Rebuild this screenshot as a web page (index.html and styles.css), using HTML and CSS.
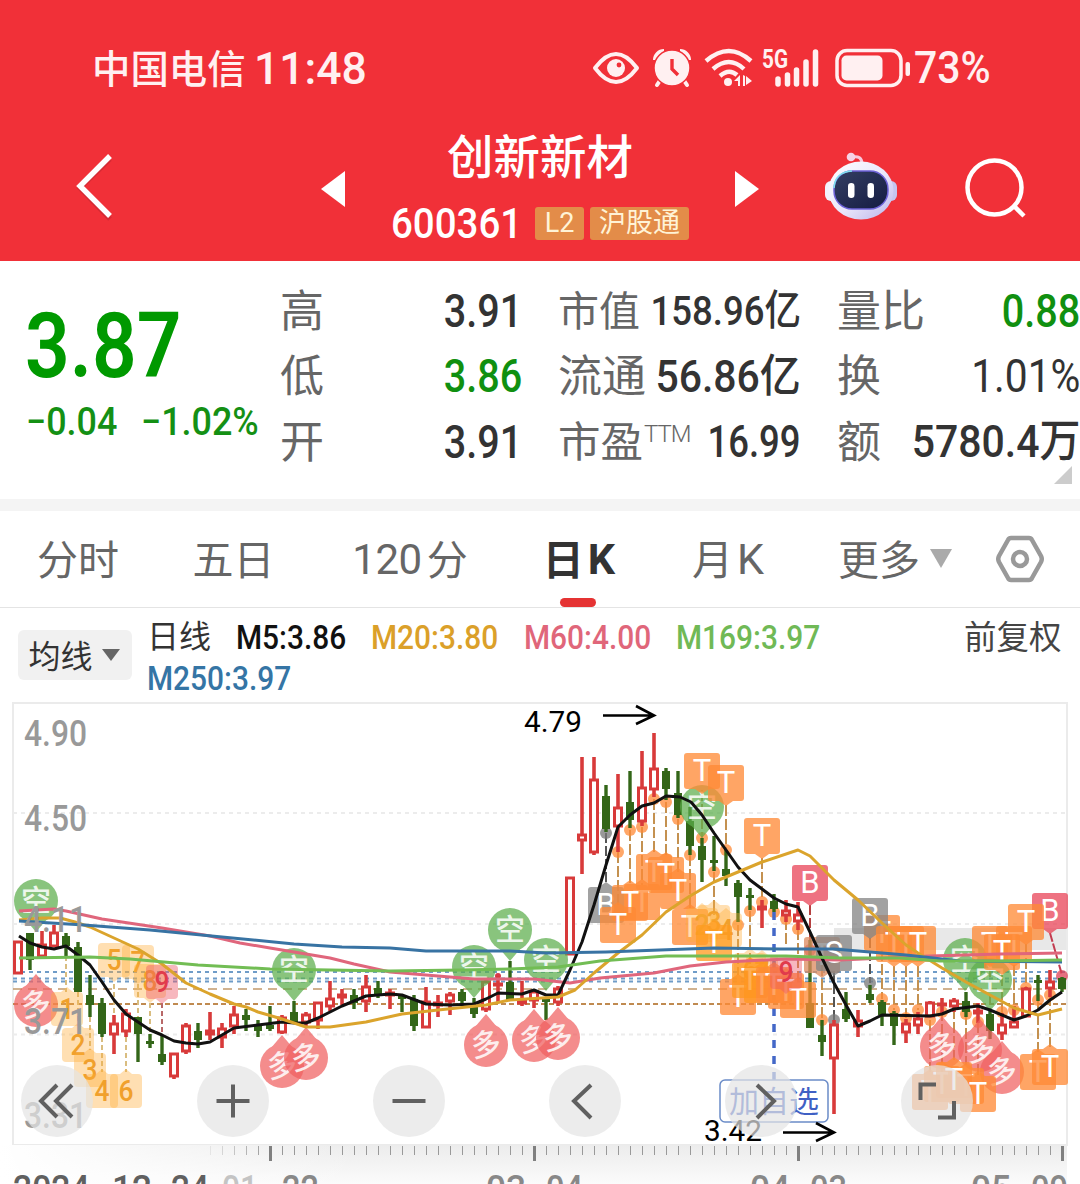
FILE: index.html
```html
<!doctype html>
<html lang="zh">
<head>
<meta charset="utf-8">
<title>创新新材 600361</title>
<link rel="stylesheet" href="styles.css">
</head>
<body>
<div class="wrap">
	<div class="header">
		<div class="status">
			<span class="carrier">中国电信</span>
			<span class="time">11:48</span>
			<div class="status-icons">
				<svg class="eye" width="46" height="32" viewBox="0 0 46 32"><path d="M2 16Q23-12 44 16Q23 44 2 16Z" fill="none" stroke="#fff0f1" stroke-width="4" stroke-linejoin="round"/><circle cx="23" cy="16" r="9" fill="#fff0f1"/><circle cx="26" cy="13" r="2.4" fill="#f13038"/></svg>
				<svg class="alarm" width="38" height="38" viewBox="0 0 38 38"><path d="M8 30L4 36M30 30L34 36" stroke="#fff0f1" stroke-width="4" stroke-linecap="round"/><path d="M2 11A9 9 0 0 1 11 2M36 11A9 9 0 0 0 27 2" fill="none" stroke="#fff0f1" stroke-width="4"/><circle cx="19" cy="19" r="18" fill="#fff0f1" stroke="#f13038" stroke-width="1.500"/><path d="M19 10V20L25 26" fill="none" stroke="#f13038" stroke-width="3.4"/></svg>
				<svg class="wifi" width="48" height="38" viewBox="0 0 48 38"><g fill="none" stroke="#fff0f1" stroke-width="4.4"><path d="M1 12Q24-8 46 12"/><path d="M8 20Q24 6 39 20"/><path d="M15 27Q24 19 32 26"/></g><circle cx="23" cy="33" r="4" fill="#fff0f1"/><path d="M29 32L35 26V37H33V32ZM38 26L40 27V37H38ZM41 27L47 32L41 36Z" fill="#fff0f1"/></svg>
				<svg class="signal" width="58" height="38" viewBox="0 0 58 38"><text x="0" y="19" font-size="25" font-weight="700" textLength="26" lengthAdjust="spacingAndGlyphs" fill="#fff0f1">5G</text><path d="M16 30V35M25.500 26V35M34.500 21V35M44 13V35M53.500 3V35" stroke="#fff0f1" stroke-width="5.500" stroke-linecap="round"/></svg>
				<svg class="battery" width="75" height="40" viewBox="0 0 75 40"><rect x="2" y="2.500" width="64" height="35" rx="10" fill="none" stroke="#fff0f1" stroke-width="3.500"/><rect x="6.500" y="7.500" width="41" height="25" rx="5" fill="#fff0f1"/><rect x="70.500" y="14" width="4.500" height="14" rx="2" fill="#fff0f1"/></svg>
				<span class="percent">73%</span>
			</div>
		</div>
		<div class="nav">
			<svg class="back" width="38" height="68" viewBox="0 0 38 68"><path d="M34 4L4 33L34 64" fill="none" stroke="#b92530" stroke-width="5" opacity=".5" transform="translate(0,2)"/><path d="M34 3L4 33L34 63" fill="none" stroke="#fff" stroke-width="5.400"/></svg>
			<svg class="prev" width="24" height="36" viewBox="0 0 24 36"><path d="M24 0V36L0 18Z" fill="#fff"/></svg>
			<div class="stock">
				<div class="name">创新新材</div>
				<div class="code-row">
					<span class="code">600361</span>
					<span class="badge badge-l2">L2</span>
					<span class="badge badge-hk">沪股通</span>
				</div>
			</div>
			<svg class="next" width="24" height="36" viewBox="0 0 24 36"><path d="M0 0V36L24 18Z" fill="#fff"/></svg>
			<svg class="robot" width="72" height="68" viewBox="0 0 72 68">
				<defs>
					<linearGradient id="head" x1="0" y1="0" x2="1" y2="1"><stop offset="0" stop-color="#fff"/><stop offset=".55" stop-color="#e9e6fb"/><stop offset="1" stop-color="#b9b3ea"/></linearGradient>
					<linearGradient id="face" x1="0" y1="0" x2="1" y2="1"><stop offset="0" stop-color="#343f63"/><stop offset="1" stop-color="#141b42"/></linearGradient>
				</defs>
				<path d="M27 5Q37 3 37 12" fill="none" stroke="#f8c9dc" stroke-width="3"/>
				<circle cx="26" cy="5" r="4.300" fill="#f6d3e6"/>
				<rect x="0" y="29" width="12" height="20" rx="6" fill="#f2f2fc"/><rect x="60" y="29" width="12" height="20" rx="6" fill="#c5c5ef"/>
				<ellipse cx="36" cy="38.500" rx="32.500" ry="29" fill="url(#head)"/>
				<rect x="9" y="19" width="54" height="38" rx="18" fill="url(#face)" stroke="#6d62d8" stroke-width="1.500"/>
				<path d="M9 36Q10 20 27 19" fill="none" stroke="#7fe0ee" stroke-width="1.500"/>
				<rect x="23" y="31" width="6.500" height="15" rx="3.200" fill="#fff"/><rect x="42.500" y="31" width="6.500" height="15" rx="3.200" fill="#fff"/>
			</svg>
			<svg class="search" width="62" height="62" viewBox="0 0 62 62"><circle cx="29.500" cy="29.500" r="27" fill="none" stroke="#fff" stroke-width="4.500"/><path d="M48 47L59 58" stroke="#fff" stroke-width="4.500"/></svg>
		</div>
	</div>

	<div class="quote">
		<div class="price">
			<div class="now">3.87</div>
			<div class="change"><span>−0.04</span><span>−1.02%</span></div>
		</div>
		<ul class="col col-1">
			<li><label>高</label><b>3.91</b></li>
			<li><label>低</label><b class="down">3.86</b></li>
			<li><label>开</label><b>3.91</b></li>
		</ul>
		<ul class="col col-2">
			<li><label class="w1">市值</label><b class="n1">158.96亿</b></li>
			<li><label>流通</label><b class="n2">56.86亿</b></li>
			<li><label class="w3">市盈<sup>TTM</sup></label><b class="n3">16.99</b></li>
		</ul>
		<ul class="col col-3">
			<li><label>量比</label><b class="down">0.88</b></li>
			<li><label>换</label><b class="light">1.01%</b></li>
			<li><label>额</label><b class="n2">5780.4万</b></li>
		</ul>
		<i class="corner"></i>
	</div>

	<ul class="tabs">
		<li>分时</li>
		<li>五日</li>
		<li><span class="d120">120</span>分</li>
		<li class="active">日<span class="k">K</span></li>
		<li>月<span class="k">K</span></li>
		<li>更多<i class="arrow"></i></li>
		<li class="set"><svg width="48" height="48" viewBox="0 0 48 48"><path d="M15 3H33Q35 3 36 5L45 21Q46.500 24 45 27L36 43Q35 45 33 45H15Q13 45 12 43L3 27Q1.500 24 3 21L12 5Q13 3 15 3Z" fill="none" stroke="#999" stroke-width="4.500"/><circle cx="24" cy="24" r="7" fill="none" stroke="#999" stroke-width="4.500"/></svg></li>
	</ul>

	<div class="legend">
		<div class="select">均线<i class="arrow"></i></div>
		<div class="ma">
			<span class="day">日线</span>
			<span class="m5">M5:3.86</span>
			<span class="m20">M20:3.80</span>
			<span class="m60">M60:4.00</span>
			<span class="m169">M169:3.97</span>
			<span class="m250">M250:3.97</span>
		</div>
		<div class="adjust">前复权</div>
	</div>

	<div class="chart">
		<svg id="kline" width="1080" height="484" viewBox="0 700 1080 484"></svg>
		<div class="tools">
			<button><svg width="40" height="40" viewBox="0 0 40 40"><path d="M20 4L4 20L20 36M35 4L19 20L35 36"/></svg></button>
			<button><svg width="40" height="40" viewBox="0 0 40 40"><path d="M20 3.500V36.500M3.500 20H36.500"/></svg></button>
			<button><svg width="40" height="40" viewBox="0 0 40 40"><path d="M3.500 20H36.500"/></svg></button>
			<button><svg width="40" height="40" viewBox="0 0 40 40"><path d="M26 4L9 20L26 37"/></svg></button>
			<button><svg width="40" height="40" viewBox="0 0 40 40"><path d="M16 4L33 20L16 37"/></svg></button>
			<button><svg width="40" height="40" viewBox="0 0 40 40"><path d="M3.500 19V3.500H19M37 20V36.500H21"/></svg></button>
		</div>
	</div>
</div>
<script src="chart.js"></script>
</body>
</html>
```

FILE: styles.css
```css
body,ul,li,button,label,b,i{ margin: 0; padding: 0;}
ul,li{ list-style: none;}
b,i{ font-weight: normal; font-style: normal;}
svg{ display: block; flex: none; overflow: visible;}
body{ font-family: Roboto, "Noto Sans CJK SC", sans-serif; background: #fff; color: #333; overflow: hidden;}
.wrap{ width: 1080px; height: 1184px; overflow: hidden;}

.header{ height: 261px; background: #f13038; color: #fff;}
.status{ display: flex; align-items: center; height: 137px; padding: 0 90px 0 92px; color: #fff0f1; font-weight: 500; white-space: nowrap;}
.carrier{ font-size: 38.4px; width: 162px; margin-top: -6px;}
.time{ font-size: 44.5px;}
.status-icons{ display: flex; align-items: center; margin: -1px 0 0 auto;}
.alarm{ margin-left: 14px;}
.wifi{ margin-left: 14px;}
.battery{ margin-left: 15px;}
.signal{ margin-left: 9px;}
.percent{ width: 76px; margin-left: 4px; font-size: 44.5px; transform: scaleX(.92); transform-origin: left;}
.nav{ display: flex; align-items: center; height: 104px; padding-left: 76px;}
.back{ margin-top: -4px;}
.prev{ margin-left: 207px;}
.stock{ width: 298px; margin: 5px 46px 0 46px;}
.name{ line-height: 64px; font-size: 46.5px; font-weight: 500; text-align: center;}
.code-row{ display: flex; align-items: center; height: 68px;}
.code{ width: 144px; font-size: 42.5px; font-weight: 500; transform: scaleX(.905); transform-origin: left;}
.badge{ box-sizing: border-box; height: 33px; line-height: 32px; border-radius: 3px; background: #e38c49; color: #fff3d6; font-size: 27px; text-align: center;}
.badge-l2{ width: 49px;}
.badge-hk{ width: 99px; margin-left: 6px;}
.robot{ margin: -6px 0 0 66px;}
.search{ margin-left: 68px;}

.quote{ position: relative; display: flex; height: 238px; border-bottom: 12px solid #f4f4f4;}
.price{ width: 281px; color: #009900; white-space: nowrap;}
.now{ height: 85px; line-height: 85px; margin: 43px 0 0 25px; font-size: 90px; font-weight: 650; transform: scaleX(.87); transform-origin: left;}
.change{ display: flex; height: 66px; line-height: 66px; font-size: 39px; font-weight: 500; color: #149014;}
.change span{ width: 115px; margin-left: 26px; transform: scaleX(.92); transform-origin: left;}
.change span + span{ margin-left: 0;}
.col{ padding-top: 16px;}
.col-1{ width: 241px;}
.col-2{ width: 242px; margin-left: 37px;}
.col-3{ width: 242px; margin-left: 37px;}
.col li{ display: flex; justify-content: space-between; align-items: center; height: 65.5px; white-space: nowrap;}
.col label{ font-size: 44px; color: #666; margin: -4px 0 0 -1px;}
.col .w1{ font-size: 41px;}
.col .w3{ position: relative; font-size: 42.5px;}
.col sup{ position: absolute; left: 86px; top: 12px; font-size: 24px; line-height: 28px; font-weight: 300; letter-spacing: -1px;}
.col b{ flex: none; font-size: 46px; font-weight: 500; margin-left: -30px; transform: scaleX(.86); transform-origin: right; position: relative; top: 1px;}
.col .n1{ top: -3px; font-size: 41.5px; transform: scaleX(.88);}
.col .n2{ top: -3px; font-size: 45px; transform: scaleX(.91);}
.col .n3{ font-size: 44.5px; transform: scaleX(.82);}
.col .light{ font-weight: 400; transform: scaleX(.885);}
.col .down{ color: #109010;}
.corner{ position: absolute; right: 8px; bottom: 15px; border: 9px solid #ccc; border-top-color: transparent; border-left-color: transparent;}

.tabs{ display: grid; grid-template-columns: 156px 155px 198px 140px 158px 176px 74px; height: 96px; border-bottom: 1px solid #e4e4e4; font-size: 41px; color: #666;}
.tabs li{ position: relative; display: flex; justify-content: center; align-items: center; padding-bottom: 5px;}
.tabs .set{ padding: 0;}
.tabs .d120{ margin: 5px 5px 0 0; letter-spacing: -.5px; font-size: 42px;}
.tabs .k{ margin: 5px 0 0 4px; font-size: 43px;}
.tabs .active{ font-weight: 700; color: #333;}
.active:after{ content: ""; position: absolute; left: 51px; bottom: 0; width: 36px; height: 9px; border-radius: 5px; background: #e53333;}
.arrow{ border: 11px solid transparent; border-top: 19px solid #aaa; border-bottom: 0; margin: 4px 0 0 10px;}

.legend{ display: flex; height: 92px; font-size: 32px; color: #333;}
.select{ box-sizing: border-box; display: flex; align-items: center; justify-content: center; width: 114px; height: 50px; padding: 0 2px 3px 0; margin: 22px 15px 0 18px; border-radius: 6px; background: #f1f1f1;}
.select .arrow{ border-width: 12px 9px 0; border-top-color: #666; margin: 3px 0 0 9px;}
.ma{ display: grid; grid-template-columns: 89px 135px 153px 152px 160px; grid-template-rows: 41px 41px; margin-top: 9px; width: 817px; line-height: 41px; font-weight: 500; font-size: 33px; white-space: nowrap;}
.ma span{ transform: scaleX(.905); transform-origin: left;}
.ma .day{ font-weight: 400; font-size: 32px; transform: none;}
.ma .m5{ color: #111;}
.ma .m20{ color: #dba029;}
.ma .m60{ color: #e0667a;}
.ma .m169{ color: #70b956;}
.ma .m250{ color: #3575a5; grid-column: 1 / 3;}
.adjust{ margin-top: 10px; line-height: 41px; font-size: 32.5px; color: #444; white-space: nowrap;}

.chart{ position: relative; height: 484px;}
.tools{ position: absolute; left: 21px; top: 365px; display: flex; gap: 104px;}
.tools button{ display: flex; align-items: center; justify-content: center; width: 72px; height: 72px; border: 0; border-radius: 50%; background: rgba(228,228,228,.7);}
.tools path{ fill: none; stroke: #606060; stroke-width: 4;}
```

FILE: chart.js
```js
(function(){
	var svg = document.getElementById('kline');
	var html = '';
	var RED = '#d83a3a', GREEN = '#336618', ORANGE = '#ff8a35', GRAY = '#858585';

	// 每根: 类型 最高 最低 实体上沿 实体下沿, 间隔12
	var candles = [
		'r 941 974 942 973','g 933 970 933 960','r 931 957 945 956','r 925 947 933 946','g 933 956 936 946','g 942 992 947 992',
		'g 975 1017 995 1005','g 998 1037 1003 1034','r 1015 1054 1024 1034','r 1009 1037 1014 1031','g 1017 1062 1017 1034','g 1034 1048 1041 1044',
		'g 1036 1065 1054 1062','r 1053 1079 1054 1076','r 1023 1054 1026 1051','g 1023 1048 1031 1040','r 1012 1040 1031 1034','r 1023 1048 1029 1037',
		'r 1006 1034 1015 1026','g 1009 1031 1015 1020','g 1020 1037 1025 1031','g 1006 1031 1025 1029','r 1015 1034 1018 1032','g 1001 1024 1012 1022',
		'r 1012 1026 1015 1022','r 1002 1029 1003 1020','r 981 1011 999 1006','r 989 1005 995 997','g 989 1009 995 1003','r 975 1012 987 1001',
		'g 981 998 988 996','r 989 1009 993 995','g 995 1012 996 999','g 995 1031 999 1026','r 987 1028 1002 1027','r 995 1017 1003 1005',
		'r 992 1015 995 1001','g 989 1006 992 1001','g 998 1018 1006 1014','r 980 1012 982 1009','r 976 1003 984 985','g 961 1000 982 1000',
		'r 981 1006 1001 1003','r 990 1008 992 1000','g 997 1020 997 1002','r 986 1006 989 1002','r 877 955 878 954','r 757 874 835 840',
		'r 757 855 780 852','g 785 832 796 829','r 774 852 808 826','g 771 828 802 820','r 751 826 788 821','r 733 797 769 789',
		'g 768 800 771 789','g 771 818 793 815','g 807 855 821 846','g 838 882 846 860','g 836 871 860 863','g 850 886 869 876',
		'g 880 922 883 897','g 888 910 895 898','r 900 928 907 909','g 894 912 901 909','r 900 922 911 915','r 902 930 915 921',
		'g 940 1028 1003 1028','g 1020 1056 1035 1042','r 1020 1114 1025 1058','g 992 1022 1009 1019','r 1010 1037 1021 1026','g 985 1003 994 1000',
		'g 1000 1026 1002 1015','g 1011 1045 1013 1026','r 1019 1043 1024 1032','r 1012 1034 1019 1025','r 1001 1017 1003 1016','r 998 1015 1004 1005',
		'r 998 1012 1001 1006','g 992 1017 1001 1012','r 1003 1023 1011 1013','g 1011 1039 1014 1031','r 1013 1040 1025 1033','r 1006 1028 1022 1027',
		'r 987 1017 989 1016','g 975 1001 980 983','r 970 997 982 988','g 977 992 978 989'
	];
	var ma5 = '19,936 30,943 42,947 54,949 66,946 78,955 90,965 102,982 114,1000 126,1014 138,1022 150,1030 162,1035 174,1041 186,1043 198,1044 210,1042 222,1035 234,1028 258,1025 282,1022 294,1023 306,1023 318,1018 342,1006 366,996 390,994 402,995 426,1004 450,1005 474,1004 486,999 498,993 522,994 534,990 546,995 558,995 570,970 582,942 594,905 606,865 618,827 630,815 642,806 654,803 666,796 680,797 691,802 702,815 714,833 726,850 738,867 750,880 762,889 774,898 786,904 798,907 810,932 822,958 834,983 846,1005 858,1026 870,1021 882,1015 930,1016 942,1014 954,1009 978,1006 990,1010 1014,1020 1026,1016 1038,1010 1050,1000 1062,992';
	var ma20 = '19,920 42,918 60,918 75,922 90,927 114,938 138,949 162,964 186,983 210,994 234,1004 246,1007 258,1012 282,1019 306,1027 330,1027 366,1022 402,1014 438,1010 486,1005 510,1000 558,997 575,990 594,973 618,953 642,935 666,912 690,896 714,882 738,872 762,862 798,850 810,856 834,880 858,900 882,923 906,945 918,953 942,968 966,982 990,995 1014,1008 1038,1015 1062,1009';
	var ma60 = '19,911 54,909 66,911 102,919 162,928 210,936 240,943 270,948 330,958 354,964 390,972 426,975 474,979 534,979 570,983 600,978 654,973 690,966 726,962 786,959 840,960 930,956 1000,954 1062,953';
	var ma169 = '19,958 90,957 130,959 198,965 270,969 390,971 462,970 510,969 558,967 600,961 666,956 726,956 786,956 840,958 900,958 940,961 1000,961 1062,960';
	var ma250 = '19,921 84,925 150,930 222,937 294,944 342,947 390,948 426,951 510,951 546,953 606,952 660,950 714,948 780,949 834,949 906,955 960,961 1062,962';

	function line(x1, y1, x2, y2, color, w, dash){
		html += '<line x1="'+x1+'" y1="'+y1+'" x2="'+x2+'" y2="'+y2+'" stroke="'+color+'" stroke-width="'+w+'"'+(dash ? ' stroke-dasharray="'+dash+'"' : '')+'/>';
	}
	function rect(x, y, w, h, color, more){
		html += '<rect x="'+x+'" y="'+y+'" width="'+w+'" height="'+h+'" fill="'+color+'" '+(more || '')+'/>';
	}
	function text(s, x, y, size, color, len, more){
		html += '<text x="'+x+'" y="'+y+'" font-size="'+size+'" fill="'+color+'" '+(len ? 'textLength="'+len+'" lengthAdjust="spacingAndGlyphs" ' : '')+(more || '')+'>'+s+'</text>';
	}
	function poly(points, color, w){
		html += '<polyline points="'+points+'" fill="none" stroke="'+color+'" stroke-width="'+w+'" stroke-linejoin="round"/>';
	}
	function dot(x, y, color){
		html += '<circle cx="'+x+'" cy="'+y+'" r="6" fill="'+color+'" opacity=".75"/>';
	}
	// 空 / 多 气泡
	function bubble(s, x, y){
		var up = s == '多', c = up ? '#f06060' : '#5cae4c', d = up ? -1 : 1;
		html += '<g opacity=".72"><circle cx="'+x+'" cy="'+y+'" r="22" fill="'+c+'"/><path d="M'+(x-11)+' '+(y+d*18)+'L'+x+' '+(y+d*31)+'L'+(x+11)+' '+(y+d*18)+'Z" fill="'+c+'"/></g>';
		text(s, x, y+10, 30, '#fff', 0, 'text-anchor="middle" opacity=".85" font-weight="500" '+(up ? 'transform="rotate(-10 '+x+' '+y+')"' : ''));
	}
	// 信号方块 d=1 尖角朝下, d=-1 朝上
	function sign(s, x, y, d, color){
		html += '<g opacity=".76"><rect x="'+(x-18)+'" y="'+(y-18)+'" width="36" height="36" rx="3" fill="'+color+'"/><path d="M'+(x-7)+' '+(y+d*18)+'L'+x+' '+(y+d*23)+'L'+(x+7)+' '+(y+d*18)+'Z" fill="'+color+'"/></g>';
		text(s, x, y+10, 31, '#fff', 0, 'text-anchor="middle"');
	}
	// 九转数字
	function td(s, x, y, d, nine){
		var c = nine ? '#ee5565' : '#ffae38';
		html += '<g opacity="'+(nine ? .42 : .38)+'"><rect x="'+(x-16)+'" y="'+(y-17)+'" width="32" height="34" rx="4" fill="'+c+'"/><path d="M'+(x-6)+' '+(y+d*17)+'L'+x+' '+(y+d*22)+'L'+(x+6)+' '+(y+d*17)+'Z" fill="'+c+'"/></g>';
		text(s, x, y+10, 29, nine ? '#e13b4c' : '#f0a02c', 15, 'text-anchor="middle" font-weight="500"');
	}
	function date(parts, color){
		parts.forEach(function(p){ text(p[0], p[1], 1201, 37, color, p[2], 'font-weight="500"'); });
	}

	// 边框与网格
	rect(834, 928, 233, 22, '#e8e8e8');
	rect(13, 703, 1054, 442, 'none', 'stroke="#ebebeb" stroke-width="2"');
	[813, 924, 1034.5].forEach(function(y){ line(13, y, 1066, y, '#ececec', 2, '4 4'); });
	[972, 978.5, 981.5].forEach(function(y){ line(13, y, 1066, y, '#6f9cc8', 2, '4 4'); });
	line(13, 989, 1066, 989, '#c2996b', 1.6, '9 6');
	line(13, 1004, 1066, 1004, '#c08a50', 2, '5 3');

	// 信号引线
	[[618,852,905],[630,830,885],[642,827,885],[654,799,853],[666,802,855],[678,819,872],[690,855,910],[702,790,838],[714,872,915],[726,805,850],[738,925,975],[750,911,985],[762,858,902],[786,919,945],[798,929,985],[822,965,1020],[882,950,999],[894,966,1010],[906,966,1018],[918,966,1010],[930,1020,1072],[942,1010,1075],[954,1008,1060],[966,1014,1065],[978,1022,1078],[990,966,1011],[1002,975,1013],[1014,965,1010],[1026,944,988],[1038,1000,1052],[1050,995,1047]].forEach(function(a){
		line(a[0], a[1], a[0], a[2], '#c49150', 2, '11 3');
	});
	[[66,956,992],[78,992,1026],[90,1017,1050],[102,1037,1072],[114,984,1015],[126,1037,1072],[138,984,1017],[150,1003,1034]].forEach(function(a){
		line(a[0], a[1], a[0], a[2], '#d9bd80', 2, '5 3');
	});
	line(162, 1003, 162, 1036, '#b86868', 2, '5 3');
	line(606, 833, 606, 885, '#555', 2, '10 3');
	line(834, 971, 834, 1020, '#555', 2, '10 3');
	line(870, 938, 870, 983, '#555', 2, '10 3');
	line(810, 905, 810, 950, '#b54040', 2, '10 3');
	line(1050, 933, 1062, 975, '#c23c50', 2, '9 2');

	[[618,852],[630,830],[642,827],[654,799],[666,802],[678,819],[690,855],[702,838],[714,872],[726,850],[738,925],[750,911],[762,902],[774,912],[786,919],[798,929],[822,1020],[882,999],[894,1010],[906,1018],[918,1010],[930,1020],[942,1012],[966,1014],[978,1022],[1002,1012],[1014,1010],[1026,988],[1038,1000],[1050,995]].forEach(function(a){ dot(a[0], a[1], ORANGE); });
	[[606,833],[834,1020],[870,983]].forEach(function(a){ dot(a[0], a[1], '#777'); });
	[[810,950],[1062,976]].forEach(function(a){ dot(a[0], a[1], '#dd4055'); });
	html += '<circle cx="498" cy="976" r="3" fill="#d83a4a"/>';

	candles.forEach(function(s, i){
		var a = s.split(' '), x = 18 + i*12, red = a[0] == 'r';
		var top = +a[3], h = a[4] - a[3];
		if(red){
			if(top > +a[1]) line(x, a[1], x, top, RED, 3.6);
			if(+a[4] < +a[2]) line(x, a[4], x, a[2], RED, 3.6);
			rect(x-3.5, top, 7, Math.max(h, 1), '#fff', 'stroke="'+RED+'" stroke-width="3"');
		}else{
			line(x, a[1], x, a[2], GREEN, 3.4);
			rect(x-4, top, 8, h, GREEN);
		}
	});

	[[36,901],[294,970],[474,967],[510,930],[546,960],[702,807],[965,960],[990,980]].forEach(function(a){ bubble('空', a[0], a[1]); });
	[[36,1005],[282,1066],[306,1058],[486,1045],[534,1040],[558,1038],[942,1047],[980,1050],[1002,1072]].forEach(function(a){ bubble('多', a[0], a[1]); });

	td('1', 67, 1009, -1); td('2', 78, 1045, -1); td('3', 90, 1070, -1);
	td('5', 114, 960, 1); td('7', 138, 962, 1); td('8', 150, 981, 1);
	td('4', 102, 1091, -1); td('6', 126, 1091, -1); td('9', 162, 982, 1, true);

	// 加自选
	line(774, 912, 774, 1080, '#4468c8', 3.5, '8 8');
	rect(720, 1080, 108, 42, '#fff', 'rx="5" stroke="#6b8cc8" stroke-width="1.500"');
	text('加自选', 729, 1112, 30, '#3f60c4');

	sign('T', 702, 771, 1, ORANGE); sign('T', 726, 783, 1, ORANGE); sign('T', 762, 836, 1, ORANGE);
	sign('B', 606, 905, -1, GRAY);
	sign('T', 642, 902, -1, ORANGE); sign('T', 630, 903, -1, ORANGE); sign('T', 618, 925, -1, ORANGE);
	sign('T', 654, 872, -1, ORANGE); sign('T', 666, 875, -1, ORANGE); sign('T', 678, 891, -1, ORANGE);
	sign('T', 690, 927, -1, ORANGE);
	td('2', 702, 925, -1); td('3', 714, 922, -1); td('4', 726, 930, -1);
	sign('T', 714, 943, -1, '#ff9c20'); td('6', 750, 970, -1); td('7', 762, 972, -1);
	sign('T', 738, 997, -1, ORANGE); sign('T', 750, 980, -1, '#ff9720'); sign('T', 762, 985, -1, '#ff9720'); sign('T', 774, 985, -1, ORANGE); sign('T', 786, 991, -1, ORANGE); sign('T', 798, 1000, -1, ORANGE);
	td('9', 786, 972, 1, true);
	sign('B', 810, 883, 1, '#e9475a');
	sign('T', 822, 955, 1, '#dd8b60'); sign('S', 834, 953, 1, GRAY);
	sign('T', 882, 933, 1, ORANGE); sign('B', 870, 916, 1, GRAY);
	sign('T', 894, 944, 1, ORANGE); sign('T', 906, 944, 1, ORANGE); sign('T', 918, 944, 1, ORANGE);
	sign('T', 990, 944, 1, ORANGE); sign('T', 1014, 944, 1, ORANGE); sign('T', 1002, 952, 1, ORANGE);
	sign('B', 1050, 911, 1, '#e9475a'); sign('T', 1026, 922, 1, ORANGE);
	sign('T', 930, 1092, -1, ORANGE); sign('T', 942, 1084, -1, ORANGE); sign('T', 966, 1086, -1, ORANGE); sign('T', 954, 1080, -1, ORANGE); sign('T', 978, 1094, -1, ORANGE);
	sign('T', 1038, 1072, -1, ORANGE); sign('T', 1050, 1067, -1, ORANGE);

	// 均线
	poly(ma60, '#e0667c', 3);
	poly(ma5, '#111', 3);
	poly(ma20, '#dba42c', 3);
	poly(ma250, '#3873a3', 3);
	poly(ma169, '#72bd54', 3);

	// 纵轴
	[['4.90',746],['4.50',831],['4.11',932],['3.71',1034],['3.31',1128]].forEach(function(a){
		text(a[0], 24, a[1], 36.5, '#999', 63, 'font-weight="500"');
	});

	// 最高 最低
	text('4.79', 524, 732, 30, '#000', 58);
	html += '<path d="M603 715.500H653M636 706L654 715.500L636 724" fill="none" stroke="#000" stroke-width="2.600"/>';
	text('3.42', 704, 1141, 30, '#000', 58);
	html += '<path d="M783 1132.500H833M816 1123L834 1132.500L816 1141" fill="none" stroke="#000" stroke-width="2.600"/>';

	// 时间标尺
	html += '<defs><linearGradient id="rv" x1="0" y1="0" x2="0" y2="1"><stop offset="0" stop-color="#ececec"/><stop offset="1" stop-color="#fbfbfb"/></linearGradient><linearGradient id="rh"><stop offset="0" stop-color="#fff"/><stop offset="1" stop-color="#fff" stop-opacity="0"/></linearGradient></defs>';
	rect(0, 1145, 1067, 39, 'url(#rv)');
	rect(0, 1145, 360, 39, 'url(#rh)');
	for(var x = 210; x <= 1062; x += 12){
		var big = (x - 270) % 264 == 0;
		if(big) line(x+.5, 1146, x+.5, 1161, '#808080', 3);
		else html += '<line x1="'+(x+.5)+'" y1="1146" x2="'+(x+.5)+'" y2="1155" stroke="#999" opacity="'+Math.min(1, (x-198)/70)+'"/>';
	}
	date([['2024-', 13, 88], ['12-', 112, 52], ['24', 171, 38]], '#606060');
	date([['01', 222, 36]], '#c4c4c4');
	date([['-', 263, 12], ['22', 282, 37]], '#888');
	date([['03-', 486, 52], ['04', 546, 37]], '#888');
	date([['04-', 750, 52], ['03', 810, 37]], '#888');
	date([['05-', 971, 52], ['09', 1031, 37]], '#888');

	svg.innerHTML = html;
})();
```
